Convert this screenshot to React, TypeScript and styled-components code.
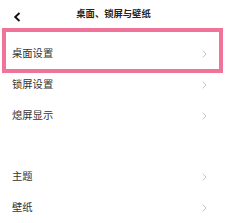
import React from "react";
import styled, { createGlobalStyle } from "styled-components";

const Global = createGlobalStyle`
  html, body { margin: 0; padding: 0; background: #ffffff; }
  body { font-family: "Noto Sans CJK SC", "Noto Sans", sans-serif; }
`;

const Page = styled.div`
  width: 226px;
  height: 223px;
  overflow: hidden;
  background: #ffffff;
  display: flex;
  flex-direction: column;
`;

const Header = styled.div`
  height: 34px;
  display: flex;
  align-items: center;
  justify-content: center;
  position: relative;
  margin-bottom: 10px;
`;

const Back = styled.svg`
  position: absolute;
  left: 13px;
  top: 12px;
`;

const Title = styled.div`
  font-size: 9.3px;
  font-weight: 700;
  color: #222;
  line-height: 1;
  margin-left: 1px;
`;

const List = styled.div`
  display: flex;
  flex-direction: column;
`;

const Row = styled.div`
  height: 31px;
  display: flex;
  align-items: center;
  justify-content: space-between;
  padding: 0 19px 0 12px;
  position: relative;
`;

const Label = styled.span`
  font-size: 10.3px;
  color: #333;
  line-height: 1;
`;

const Spacer = styled.div`
  height: 30px;
`;

const Highlight = styled.div`
  position: absolute;
  left: 2px;
  right: 3px;
  top: -10px;
  height: 45px;
  box-sizing: border-box;
  border: 4px solid #f07399;
  pointer-events: none;
`;

const Chevron = () => (
  <svg width="5" height="8" viewBox="0 0 5 8">
    <path d="M0.8 0.6 L4 4 L0.8 7.4" fill="none" stroke="#bdbdbd" strokeWidth="0.9" />
  </svg>
);

const items = ["桌面设置", "锁屏设置", "熄屏显示"];
const items2 = ["主题", "壁纸"];

export default function App() {
  return (
    <>
      <Global />
      <Page>
        <Header>
          <Back width="8" height="10" viewBox="0 0 8 10">
            <path d="M6.5 1 L2.2 5 L6.5 9" fill="none" stroke="#111" strokeWidth="1.9" />
          </Back>
          <Title>桌面、锁屏与壁纸</Title>
        </Header>
        <List>
          {items.map((t, i) => (
            <Row key={t}>
              <Label>{t}</Label>
              <Chevron />
              {i === 0 && <Highlight />}
            </Row>
          ))}
          <Spacer />
          {items2.map((t) => (
            <Row key={t}>
              <Label>{t}</Label>
              <Chevron />
            </Row>
          ))}
        </List>
      </Page>
    </>
  );
}
